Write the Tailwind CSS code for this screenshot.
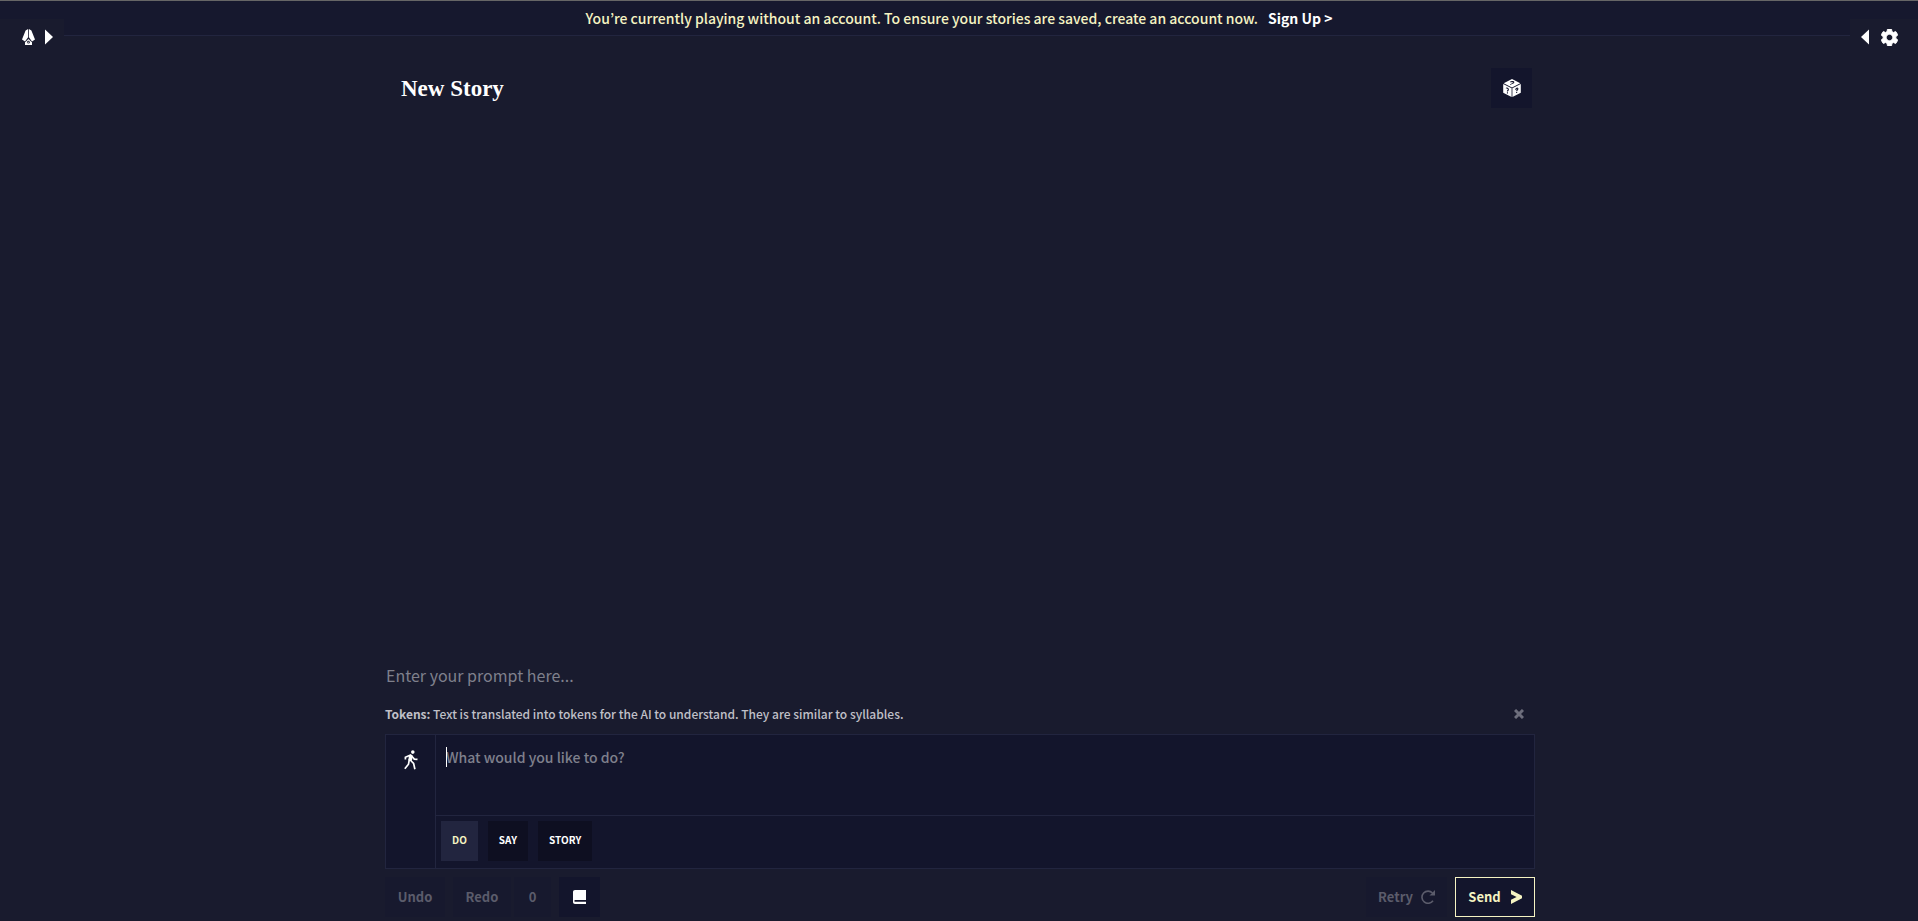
<!DOCTYPE html>
<html lang="en">
<head>
    <meta charset="UTF-8">
    <meta name="viewport" content="width=device-width, initial-scale=1.0">
    <title>New Story</title>
    <script src="https://cdn.jsdelivr.net/npm/@tailwindcss/browser@4"></script>
</head>
<body class="h-screen min-h-96 flex flex-col overflow-hidden bg-[#191b2e] text-white font-['Noto_Sans_CJK_JP',sans-serif]">
    <!-- Account banner -->
    <header class="flex h-9 shrink-0 items-center justify-center gap-2.5 border-t border-t-[#666666] border-b border-b-[#22253f] bg-[#16182e] text-sm leading-5">
        <p class="font-medium text-[#f5f3c2]">You’re currently playing without an account. To ensure your stories are saved, create an account now.</p>
        <a href="#" class="font-bold">Sign Up &gt;</a>
    </header>

    <!-- Sidebar toggles -->
    <button type="button" aria-label="Open library" class="absolute left-0 top-[19px] flex h-9 w-16 items-center gap-2.5 bg-[#191b2e] pl-[22px]">
        <svg class="h-4 w-[13px]" viewBox="0 0 13 16" fill="currentColor">
            <path d="M6.1 0v8.2L3 12.6 0 10.4 3.6 1.6zM6.9 0v8.2l3.1 4.4 3-2.2L9.4 1.6z"/>
            <path fill-rule="evenodd" d="M4.2 12.2 6.5 10l2.3 2.2 1.2 1V16H3v-2.8zM6.5 11.8a1.4 1.4 0 1 0 0 2.8 1.4 1.4 0 0 0 0-2.8z"/>
            <path d="m5.6 13.8 1.6-1.6.4.4L6 14.2z"/>
        </svg>
        <svg class="h-4 w-2" viewBox="0 0 8 16" fill="currentColor"><path d="M0 .5 8 8 0 15.5z"/></svg>
    </button>
    <button type="button" aria-label="Open settings" class="absolute right-0 top-[19px] flex h-9 w-[68px] items-center justify-end gap-3 bg-[#191b2e] pr-5">
        <svg class="h-4 w-2" viewBox="0 0 8 16" fill="currentColor"><path d="M8 .5 0 8l8 7.5z"/></svg>
        <svg class="size-[17px]" viewBox="2 2 20 20" fill="currentColor"><path stroke="currentColor" d="M19.43 12.98c.04-.32.07-.64.07-.98s-.03-.66-.07-.98l2.11-1.65c.19-.15.24-.42.12-.64l-2-3.46c-.12-.22-.39-.3-.61-.22l-2.49 1c-.52-.4-1.08-.73-1.69-.98l-.38-2.65C14.46 2.18 14.25 2 14 2h-4c-.25 0-.46.18-.49.42l-.38 2.65c-.61.25-1.17.59-1.69.98l-2.49-1c-.23-.09-.49 0-.61.22l-2 3.46c-.13.22-.07.49.12.64l2.11 1.65c-.04.32-.07.65-.07.98s.03.66.07.98l-2.11 1.65c-.19.15-.24.42-.12.64l2 3.46c.12.22.39.3.61.22l2.49-1c.52.4 1.08.73 1.69.98l.38 2.65c.03.24.24.42.49.42h4c.25 0 .46-.18.49-.42l.38-2.65c.61-.25 1.17-.59 1.69-.98l2.49 1c.23.09.49 0 .61-.22l2-3.46c.12-.22.07-.49-.12-.64zM12 15.8c-2.1 0-3.8-1.7-3.8-3.8s1.7-3.8 3.8-3.8 3.8 1.7 3.8 3.8-1.7 3.8-3.8 3.8z"/></svg>
    </button>

    <main class="mx-auto flex w-full max-w-[1152px] min-h-0 flex-1 flex-col pl-0.5 pt-8 pb-1">
        <div class="flex items-center justify-between pl-4 pr-[3px]">
            <h1 class="pt-0.5 font-['Liberation_Serif',serif] text-[23px] leading-8 font-bold">New Story</h1>
            <button type="button" aria-label="Randomize" class="flex h-10 w-[41px] items-center justify-center bg-[#13152c]">
                <svg class="size-[18px]" viewBox="0 0 18 18">
                    <path fill="#fff" d="M9 0 17.3 4.2 9 8.6.7 4.2zM.2 5 8.6 9.3V18L.2 13.7zM17.8 5 9.4 9.3V18l8.4-4.3z"/>
                    <path fill="none" stroke="#13152c" stroke-width="1.1" d="M7.3 3.1c1.6-1.3 4.4-.3 3.2.8-.6.5-1.5.3-1.9.8M3.2 9.4c.4-1.2 2.4.2 2.2 1.4-.1.8-1 .7-1 1.6M12.7 10.9c.1-1.8 2.2-2.5 2.2-1.1 0 1-1.2 1.2-1.2 2.4"/>
                    <path fill="#13152c" d="M7.2 5.2h1.2v.9H7.2zM3.9 13.3h1.1v1.1H3.9zM13.1 13h1.1v1.1h-1.1z"/>
                </svg>
            </button>
        </div>

        <div class="flex min-h-0 flex-1 flex-col justify-end">
            <textarea aria-label="Story" rows="1" placeholder="Enter your prompt here..." class="h-[31px] w-full resize-none px-px text-base leading-6 placeholder:text-[#7f808c] outline-none"></textarea>
        </div>

        <div class="mt-2 flex h-6 items-center justify-between pr-[11px] text-[#c0c0c8]">
            <p class="text-xs font-medium"><strong>Tokens:</strong> Text is translated into tokens for the AI to understand. They are similar to syllables.</p>
            <button type="button" aria-label="Dismiss tip" class="text-[#6d6e7c]">
                <svg class="size-2.5" viewBox="0 0 10 10" fill="none" stroke="currentColor" stroke-width="3"><path d="m1 1 8 8M9 1 1 9"/></svg>
            </button>
        </div>

        <!-- Adventure input -->
        <div class="mt-2 flex h-[135px] shrink-0 border border-[#22253f] bg-[#13152c]">
            <div class="flex w-[50px] shrink-0 justify-center border-r border-[#22253f] pt-[15px]">
                <svg class="h-5 w-[14px]" viewBox="0 0 14 20">
                    <circle cx="8.8" cy="2.1" r="1.8" fill="#fff"/>
                    <path fill="none" stroke="#fff" stroke-width="1.7" d="M1.4 9.6V7.2L6.6 5l1.3 1.3 2.4 2.8 3.2.3"/>
                    <path fill="#fff" d="m5 5 3.7.6-.8 5.3-3.5-.7z"/>
                    <path fill="none" stroke="#fff" stroke-width="1.7" d="m5.4 9-.9 5.2-3.7 4.5M6.2 10l3.4 3.4 1.3 5.8"/>
                </svg>
            </div>
            <div class="flex flex-1 flex-col">
                <div class="relative flex-1 px-2.5 pt-2.5">
                    <textarea aria-label="Action" placeholder="What would you like to do?" class="block h-full w-full resize-none text-sm leading-6 font-medium placeholder:text-[#7f808c] outline-none"></textarea>
                    <!-- caret -->
                    <span class="absolute left-2.5 top-3 h-5 w-px bg-white"></span>
                </div>
                <div class="flex h-[53px] gap-2.5 border-t border-[#22253f] px-[5px] pt-[5px] text-[10px] leading-4 font-bold">
                    <button type="button" class="h-10 bg-[#22253f] px-[11px] pb-0.5 text-[#f5f3c2]">DO</button>
                    <button type="button" class="h-10 bg-[#0e0f21] px-[11px] pb-0.5">SAY</button>
                    <button type="button" class="h-10 bg-[#0e0f21] px-[11px] pb-0.5">STORY</button>
                </div>
            </div>
        </div>

        <!-- Controls -->
        <div class="mt-2 flex h-10 shrink-0 justify-between text-[13px] font-bold">
            <div class="flex">
                <button type="button" disabled class="w-[60px] bg-[#17192e] text-[#5b5c6b]">Undo</button>
                <button type="button" disabled class="ml-2 w-[58px] bg-[#17192e] text-[#5b5c6b]">Redo</button>
                <button type="button" disabled class="ml-[3px] w-[37px] bg-[#17192e] text-[#5b5c6b]">0</button>
                <button type="button" aria-label="Lorebook" class="ml-2 flex w-[41px] items-center justify-center bg-[#13152c]">
                    <svg class="h-[14px] w-[13px]" viewBox="0 0 13 14" fill="#fff"><path d="M2 0h11v10H2.4c-.7 0-1 .4-1 .9s.3.9 1 .9H13V14H2c-1.2 0-2-.9-2-2V2C0 .9.8 0 2 0z"/></svg>
                </button>
            </div>
            <div class="flex gap-2">
                <button type="button" disabled class="flex w-[81px] items-center justify-center gap-2 bg-[#17192e] text-[#5b5c6b]">
                    Retry
                    <svg class="size-[14px]" viewBox="0 0 14 14" fill="none" stroke="currentColor" stroke-width="1.6"><path d="M11.5 3A6.1 6.1 0 1 0 12 10.8"/><path fill="currentColor" stroke="none" d="M14 0v5.6H8.4l2.2-2.2z"/></svg>
                </button>
                <button type="button" class="flex w-20 items-center justify-center gap-2.5 border border-[#f5f3c2] bg-[#13152c] text-[#f5f3c2]">
                    Send
                    <svg class="h-[14px] w-[11px]" viewBox="0 0 11 14" fill="currentColor"><path d="M0 0 11 5.8v2.4L0 14V9.8L5.6 7 0 4.2z"/></svg>
                </button>
            </div>
        </div>
    </main>
</body>
</html>
